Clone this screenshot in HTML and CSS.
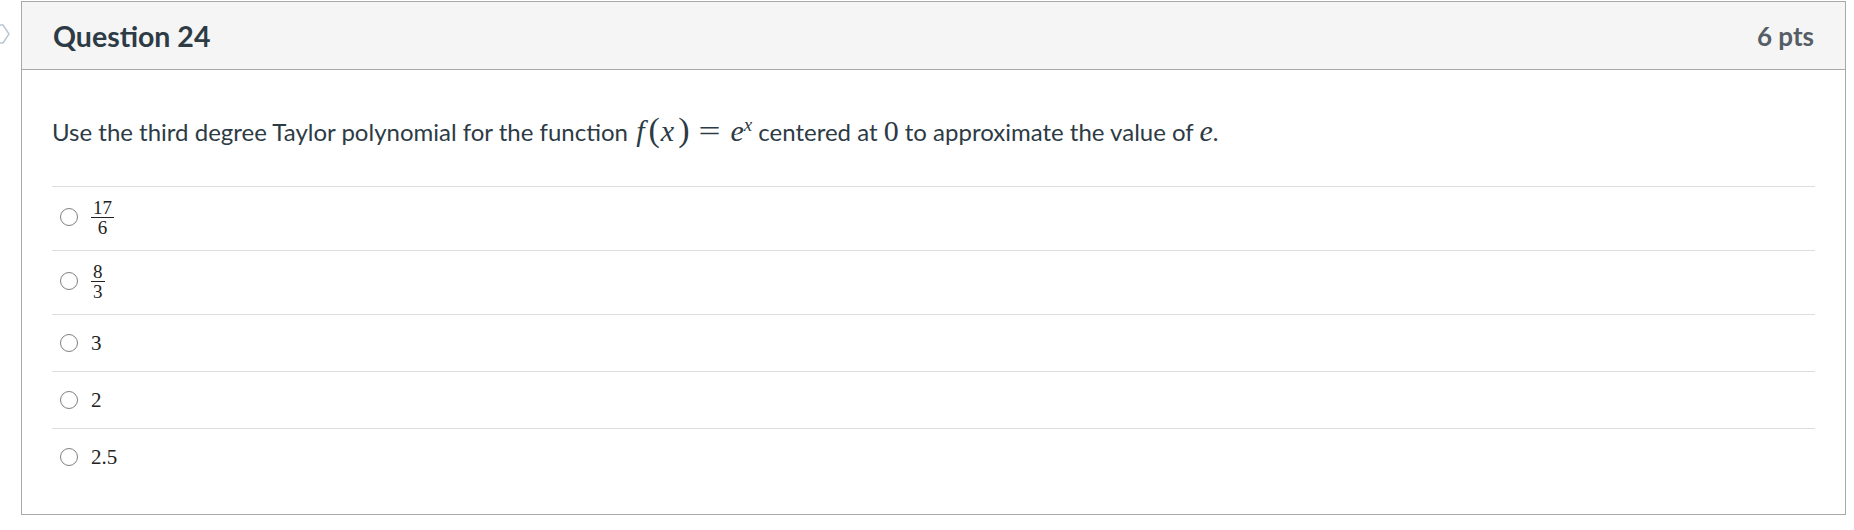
FILE: index.html
```html
<!DOCTYPE html>
<html>
<head>
<meta charset="utf-8">
<link rel="stylesheet" href="styles.css">
</head>
<body>
<div class="page">
  <div class="gutter">
    <svg class="chev" width="10" height="20" viewBox="0 0 10 20"><path d="M-4 1 L3 1 L9 10 L3 19 L-4 19" fill="none" stroke="#b9c7d3" stroke-width="1.5"/></svg>
  </div>
  <div class="question">
    <div class="qhead">
      <h2 class="qtitle">Question 24</h2>
      <span class="qpts">6 pts</span>
    </div>
    <div class="qbody">
      <p class="qtext">Use the third degree Taylor polynomial for the function <span class="m"><i class="mf">f</i><span class="mpl">(</span><i class="mx">x</i><span class="mpr">)</span><span class="meq">=</span><i>e</i><sup class="msup"><i>x</i></sup></span> centered at <span class="m">0</span> to approximate the value of <span class="m"><i>e</i></span>.</p>
      <div class="answers">
        <div class="answer tall"><span class="radio"></span><span class="frac"><span class="num">17</span><span class="den">6</span></span></div>
        <div class="answer tall"><span class="radio"></span><span class="frac"><span class="num">8</span><span class="den">3</span></span></div>
        <div class="answer"><span class="radio"></span><span class="val">3</span></div>
        <div class="answer"><span class="radio"></span><span class="val">2</span></div>
        <div class="answer"><span class="radio"></span><span class="val">2.5</span></div>
      </div>
    </div>
  </div>
</div>
</body>
</html>
```
FILE: styles.css
```css
html, body {
  margin: 0;
  padding: 0;
  background: #ffffff;
}
body {
  font-family: Lato, "Open Sans", sans-serif;
  color: #2d3b45;
}
.page {
  display: flex;
  align-items: flex-start;
  padding-top: 1px;
  width: 1846px;
}
.gutter {
  width: 21px;
  flex: none;
  padding-top: 23px;
}
.chev {
  display: block;
}
.question {
  flex: 1;
  border: 1px solid #a9a9a9;
  box-sizing: border-box;
  height: 514px;
}
.qhead {
  height: 67px;
  background: #f5f5f5;
  border-bottom: 1px solid #a9a9a9;
  display: flex;
  align-items: center;
  justify-content: space-between;
  padding: 0 31px 0 31px;
}
.qtitle {
  margin: 0;
  font-size: 28.5px;
  font-weight: 700;
  color: #2d3b45;
}
.qpts {
  font-size: 26px;
  font-weight: 700;
  color: #555e66;
}
.qbody {
  padding: 0 30px;
}
.qtext {
  margin: 0;
  padding-top: 46px;
  box-sizing: border-box;
  font-size: 24px;
  line-height: 32px;
  height: 116px;
}
.m {
  font-family: "Liberation Serif", serif;
  font-size: 30px;
  line-height: 24px;
}
.m i {
  font-style: italic;
}
.mf {
  padding-left: 2px;
  padding-right: 4px;
}
.mpl,
.mpr {
  font-size: 34px;
}
.mpl {
  padding-right: 1px;
}
.mx {
  padding-right: 3px;
}
.mpr {
  padding-left: 1px;
}
.meq {
  display: inline-block;
  transform: scaleX(1.3);
  margin: 0 12px;
}
.msup {
  font-size: 19px;
  vertical-align: 10px;
  line-height: 0;
  margin-left: 0;
}
.answers {
  border-top: 1px solid #dddddd;
}
.answer {
  display: flex;
  align-items: center;
  height: 56px;
  border-bottom: 1px solid #dddddd;
  font-family: "Liberation Serif", serif;
  color: #222;
}
.answer.tall {
  height: 63px;
}
.answer.tall .radio {
  margin-top: -4px;
}
.answer:last-child {
  border-bottom: none;
}
.radio {
  width: 16px;
  height: 16px;
  border: 1.5px solid #808080;
  border-radius: 50%;
  margin-left: 8px;
  margin-right: 13px;
  flex: none;
}
.val {
  font-size: 21px;
}
.frac {
  display: inline-flex;
  flex-direction: column;
  align-items: center;
  font-size: 19px;
  line-height: 14px;
  margin-top: -2px;
}
.num {
  padding: 0 2px 2px;
  border-bottom: 1px solid #222;
}
.den {
  padding-top: 3px;
}
```
